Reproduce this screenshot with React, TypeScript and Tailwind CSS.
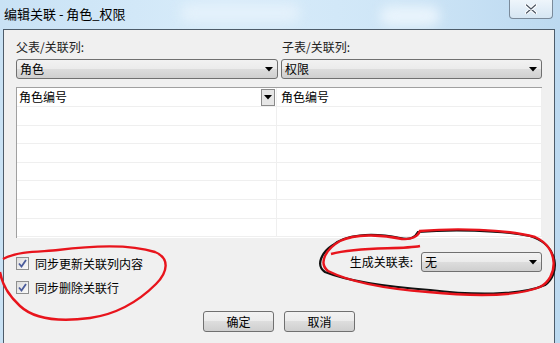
import React from 'react'

const font = { fontFamily: '"Noto Sans CJK SC", "Noto Sans", sans-serif' }

function Arrow() {
  return (
    <svg width="8" height="5" viewBox="0 0 8 5" className="shrink-0">
      <path d="M0 0 H8 L4 4.5 Z" fill="#000" />
    </svg>
  )
}

function Combo({ text, className }: { text: string; className: string }) {
  return (
    <div
      className={`h-[20px] rounded-[3px] border border-[#707070] bg-[linear-gradient(#f2f2f2_0%,#ebebeb_50%,#dddddd_50%,#cfcfcf_100%)] flex items-center pl-[3px] pr-[4px] text-[12px] leading-none text-black ${className}`}
    >
      <span className="flex-1">{text}</span>
      <Arrow />
    </div>
  )
}

function Check({ label }: { label: string }) {
  return (
    <div className="flex items-center h-[13px] gap-[6px] text-[12px] text-black">
      <div className="w-[13px] h-[13px] border border-[#8e8f8f] bg-[linear-gradient(135deg,#dcdcdc,#fbfbfb)] flex items-center justify-center">
        <svg width="9" height="9" viewBox="0 0 9 9">
          <path d="M1 4.5 L3.5 7.5 L8 1" stroke="#4b5c9b" strokeWidth="1.8" fill="none" />
        </svg>
      </div>
      <span>{label}</span>
    </div>
  )
}

function Button({ text }: { text: string }) {
  return (
    <div className="w-[71px] h-[21px] rounded-[3px] border border-[#707070] bg-[linear-gradient(#f2f2f2_0%,#ebebeb_50%,#dddddd_50%,#cfcfcf_100%)] flex items-center justify-center text-[12px] text-black">
      {text}
    </div>
  )
}

export default function App() {
  const rows = [0, 1, 2, 3, 4, 5, 6]
  return (
    <div
      style={font}
      className="relative w-[560px] h-[343px] overflow-hidden bg-[linear-gradient(90deg,#c9e2f5,#d8ecfa_40%,#cfe6f7_70%,#bcd9f0)]"
    >
      {/* blurred glass backdrop */}
      <div className="absolute left-[380px] top-[6px] w-[60px] h-[20px] rounded-full bg-[#e9f4fc] blur-[6px]" />
      <div className="absolute left-[180px] top-[4px] w-[120px] h-[18px] rounded-full bg-[#e4f1fb] blur-[6px]" />

      {/* title bar */}
      <div className="relative h-[29px] flex items-start justify-between pl-[4px]">
        <span className="mt-[5px] text-[13px] leading-[17px] text-black">编辑关联 - 角色_权限</span>
        <div className="mr-[7px] w-[44px] h-[19px] rounded-b-[4px] border border-t-0 border-[#7a8a9a] bg-[linear-gradient(#eef5fb,#d6e6f3)] flex items-center justify-center">
          <svg width="12" height="10" viewBox="0 0 12 10">
            <path d="M1.5 1 L10.5 9 M10.5 1 L1.5 9" stroke="#fff" strokeWidth="3.2" strokeLinecap="round" />
            <path d="M1.5 1 L10.5 9 M10.5 1 L1.5 9" stroke="#4b5563" strokeWidth="1.2" strokeLinecap="round" />
          </svg>
        </div>
      </div>

      {/* client area */}
      <div className="relative ml-[3px] w-[552px] h-[314px] border-l border-t border-r border-[#4d5c6a] bg-[#f0f0f0] pl-[12px] pr-[12px] text-[12px] text-black">
        <div className="flex mt-[10px] h-[14px] leading-[14px]">
          <span className="w-[266px] text-[#222]">父表/关联列:</span>
          <span className="text-[#222]">子表/关联列:</span>
        </div>
        <div className="flex gap-[3px] mt-[5px]">
          <Combo text="角色" className="w-[262px]" />
          <Combo text="权限" className="w-[261px]" />
        </div>

        {/* grid */}
        <div className="mt-[8px] w-[526px] h-[151px] bg-white border-t border-l border-[#a0a0a0] flex flex-col">
          <div className="flex h-[19px] border-b border-[#efefef]">
            <div className="w-[260px] flex items-center pl-[2px] border-r border-[#efefef]">
              <span className="flex-1">角色编号</span>
              <div className="w-[14px] h-[17px] mr-[1px] border border-[#8a8a8a] bg-[#e6e6e6] flex items-center justify-center">
                <Arrow />
              </div>
            </div>
            <div className="flex-1 flex items-center pl-[4px] border-r border-[#efefef]">角色编号</div>
          </div>
          {rows.map(i => (
            <div key={i} className="flex h-[18.6px] border-b border-[#efefef]">
              <div className="w-[260px] border-r border-[#efefef]" />
              <div className="flex-1 border-r border-[#efefef]" />
            </div>
          ))}
        </div>

        {/* options */}
        <div className="flex justify-between mt-[14px]">
          <div className="flex flex-col gap-[11px] mt-[5px]">
            <Check label="同步更新关联列内容" />
            <Check label="同步删除关联行" />
          </div>
          <div className="flex items-center h-[20px] gap-[8px]">
            <span>生成关联表:</span>
            <Combo text="无" className="w-[121px]" />
          </div>
        </div>

        <div className="flex justify-center gap-[10px] mt-[17px]">
          <Button text="确定" />
          <Button text="取消" />
        </div>
      </div>

      {/* red annotations */}
      <svg className="absolute left-0 top-0 pointer-events-none" width="560" height="343" viewBox="0 0 560 343">
        <path
          d="M3 259 C20 250 45 252 58 250 C90 246 130 244 155 252 C170 258 168 272 156 284 C140 300 118 314 90 318 C60 322 35 320 20 306 C8 295 2 285 0 272"
          stroke="#e8141c" strokeWidth="2.4" fill="none"
        />
        <path
          d="M333 245 C345 235 370 232 400 238 C410 240 415 238 418 232 C450 229 500 230 530 236 C560 245 560 275 545 285 C520 296 470 295 430 290 C390 287 350 282 325 272 C315 265 322 252 333 245"
          stroke="#111" strokeWidth="2.2" fill="none"
        />
        <path
          d="M340 241 C355 234 380 234 402 239 C412 240 418 236 420 231 C455 228 505 229 535 237 C560 248 558 278 540 287 C515 297 468 296 428 292 C388 289 352 283 328 271 C318 263 326 249 340 241 M331 254 C360 246 400 250 420 246"
          stroke="#e8141c" strokeWidth="2.4" fill="none"
        />
      </svg>
    </div>
  )
}
